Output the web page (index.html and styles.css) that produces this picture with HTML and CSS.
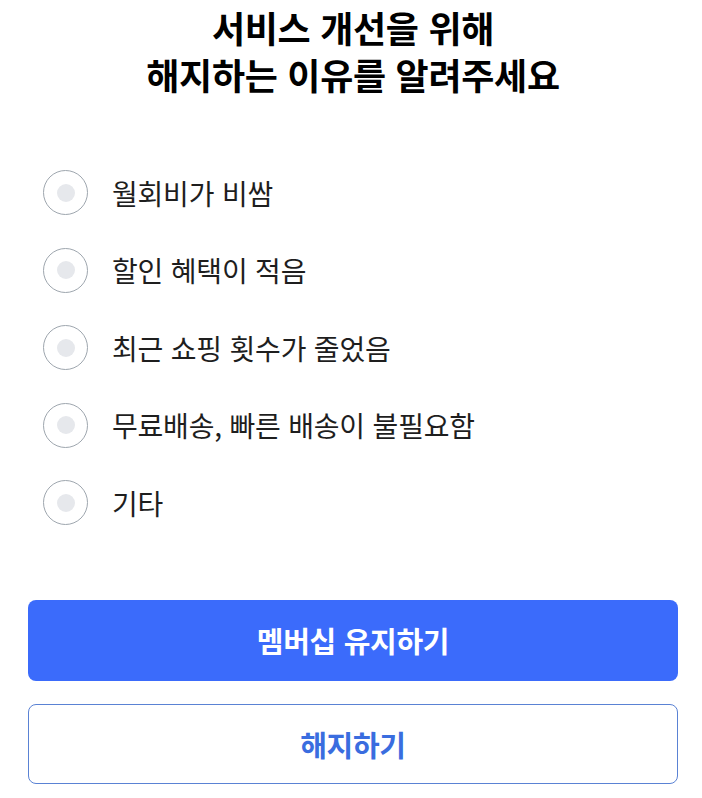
FILE: index.html
```html
<!DOCTYPE html>
<html lang="ko">
<head>
<meta charset="utf-8">
<title>해지 사유</title>
<link rel="stylesheet" href="styles.css">
</head>
<body>
<div class="page">
	<h1 class="title">서비스 개선을 위해<br>해지하는 이유를 알려주세요</h1>

	<ul class="reasons">
		<li class="reason"><span class="radio"></span><span class="label">월회비가 비쌈</span></li>
		<li class="reason"><span class="radio"></span><span class="label">할인 혜택이 적음</span></li>
		<li class="reason"><span class="radio"></span><span class="label">최근 쇼핑 횟수가 줄었음</span></li>
		<li class="reason"><span class="radio"></span><span class="label">무료배송, 빠른 배송이 불필요함</span></li>
		<li class="reason"><span class="radio"></span><span class="label">기타</span></li>
	</ul>

	<div class="actions">
		<button class="btn btn_keep" type="button">멤버십 유지하기</button>
		<button class="btn btn_cancel" type="button">해지하기</button>
	</div>
</div>
</body>
</html>
```

FILE: styles.css
```css
body {margin:0;background:#fff;font-family:"Noto Sans CJK KR","Noto Sans",sans-serif;color:#1c1c1e}
.page {padding:4px 24px 0 28px}
.title {margin:0;text-align:center;font-size:36px;line-height:47px;font-weight:700;color:#000;letter-spacing:-0.3px}
.reasons {list-style:none;margin:56px 0 0 0;padding:0}
.reason {display:flex;align-items:center;height:77.5px;gap:24px;padding-left:15px}
.radio {width:45px;height:45px;box-sizing:border-box;border:1.5px solid #9ea6ae;border-radius:50%;display:flex;align-items:center;justify-content:center}
.radio::after {content:"";width:18px;height:18px;border-radius:50%;background:#e6e8ec}
.label {font-size:28px;color:#1e1e1e;letter-spacing:-0.2px}
.actions {display:flex;flex-direction:column;gap:23px;margin-top:58px}
.btn {height:81px;border-radius:8px;font-family:inherit;font-size:29px;font-weight:700;letter-spacing:-0.3px;cursor:pointer}
.btn_keep {background:#3b6bfb;color:#fff;border:none}
.btn_cancel {height:80px;background:#fff;color:#3a6ddf;border:1.5px solid #5a82d4}
```
